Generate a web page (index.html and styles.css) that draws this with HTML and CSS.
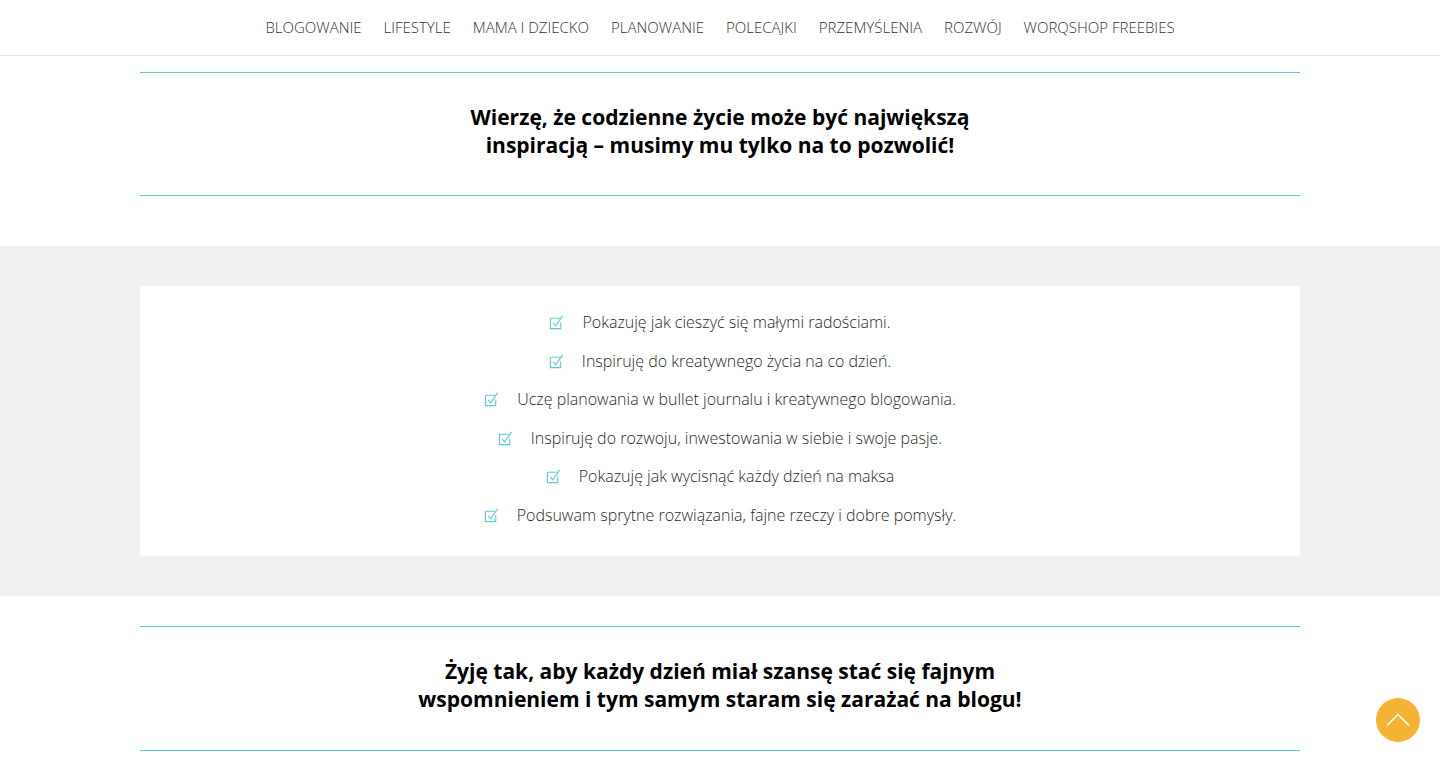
FILE: index.html
```html
<!DOCTYPE html>
<html lang="pl">
<head>
<meta charset="utf-8">
<title>Blog</title>
<link rel="stylesheet" href="styles.css">
</head>
<body>
<header class="site-header">
  <nav class="main-nav">
    <a href="#">BLOGOWANIE</a>
    <a href="#">LIFESTYLE</a>
    <a href="#">MAMA I DZIECKO</a>
    <a href="#">PLANOWANIE</a>
    <a href="#">POLECAJKI</a>
    <a href="#">PRZEMYŚLENIA</a>
    <a href="#">ROZWÓJ</a>
    <a href="#">WORQSHOP FREEBIES</a>
  </nav>
</header>

<section class="quote-section top">
  <div class="quote-box">
    <h2>Wierzę, że codzienne życie może być największą<br>inspiracją – musimy mu tylko na to pozwolić!</h2>
  </div>
</section>

<section class="gray-band">
  <div class="list-card">
    <ul class="check-list">
      <li><svg class="chk" viewBox="0 0 16 16"><path d="M1.5 3.5h10.5M1.5 3.5v11h11V8" fill="none" stroke="#5ccfd3" stroke-width="1.2"/><path d="M4.5 8.5l2.6 3L14.5 1" fill="none" stroke="#5ccfd3" stroke-width="1.2"/></svg><span>Pokazuję jak cieszyć się małymi radościami.</span></li>
      <li><svg class="chk" viewBox="0 0 16 16"><path d="M1.5 3.5h10.5M1.5 3.5v11h11V8" fill="none" stroke="#5ccfd3" stroke-width="1.2"/><path d="M4.5 8.5l2.6 3L14.5 1" fill="none" stroke="#5ccfd3" stroke-width="1.2"/></svg><span>Inspiruję do kreatywnego życia na co dzień.</span></li>
      <li><svg class="chk" viewBox="0 0 16 16"><path d="M1.5 3.5h10.5M1.5 3.5v11h11V8" fill="none" stroke="#5ccfd3" stroke-width="1.2"/><path d="M4.5 8.5l2.6 3L14.5 1" fill="none" stroke="#5ccfd3" stroke-width="1.2"/></svg><span>Uczę planowania w bullet journalu i kreatywnego blogowania.</span></li>
      <li><svg class="chk" viewBox="0 0 16 16"><path d="M1.5 3.5h10.5M1.5 3.5v11h11V8" fill="none" stroke="#5ccfd3" stroke-width="1.2"/><path d="M4.5 8.5l2.6 3L14.5 1" fill="none" stroke="#5ccfd3" stroke-width="1.2"/></svg><span>Inspiruję do rozwoju, inwestowania w siebie i swoje pasje.</span></li>
      <li><svg class="chk" viewBox="0 0 16 16"><path d="M1.5 3.5h10.5M1.5 3.5v11h11V8" fill="none" stroke="#5ccfd3" stroke-width="1.2"/><path d="M4.5 8.5l2.6 3L14.5 1" fill="none" stroke="#5ccfd3" stroke-width="1.2"/></svg><span>Pokazuję jak wycisnąć każdy dzień na maksa</span></li>
      <li><svg class="chk" viewBox="0 0 16 16"><path d="M1.5 3.5h10.5M1.5 3.5v11h11V8" fill="none" stroke="#5ccfd3" stroke-width="1.2"/><path d="M4.5 8.5l2.6 3L14.5 1" fill="none" stroke="#5ccfd3" stroke-width="1.2"/></svg><span>Podsuwam sprytne rozwiązania, fajne rzeczy i dobre pomysły.</span></li>
    </ul>
  </div>
</section>

<section class="quote-section bottom">
  <div class="quote-box">
    <h2>Żyję tak, aby każdy dzień miał szansę stać się fajnym<br>wspomnieniem i tym samym staram się zarażać na blogu!</h2>
  </div>
</section>

<a class="to-top" href="#"><svg viewBox="0 0 44 44"><path d="M11 27.5L22 16.5L33 27.5" fill="none" stroke="#fff" stroke-width="1.5"/></svg></a>
</body>
</html>
```

FILE: styles.css
```css
html, body {
  margin: 0;
  padding: 0;
  background: #fff;
  font-family: "Open Sans", "Noto Sans", sans-serif;
  color: #222;
  overflow: hidden;
}

.site-header {
  height: 55px;
  border-bottom: 1px solid #e6e6e6;
  display: flex;
  align-items: center;
  justify-content: center;
}

.main-nav {
  display: flex;
  gap: 22px;
}

.main-nav a {
  font-size: 15px;
  font-weight: 300;
  color: #333;
  text-decoration: none;
  line-height: 20px;
  margin-top: -1px;
}

.quote-section {
  display: flex;
  justify-content: center;
}

.quote-section.top {
  padding-top: 16px;
  margin-bottom: 50px;
}

.quote-section.bottom {
  padding-top: 30px;
}

.quote-box {
  width: 1160px;
  border-top: 1px solid #5ccbcc;
  border-bottom: 1px solid #5ccbcc;
  padding: 30px 0 36px;
  text-align: center;
}

.quote-section.bottom .quote-box {
  padding-bottom: 37px;
}

.quote-box h2 {
  margin: 0;
  font-size: 21px;
  line-height: 28px;
  font-weight: 700;
  color: #000;
}

.gray-band {
  background: #f1f1f1;
  padding: 40px 0;
  display: flex;
  justify-content: center;
}

.list-card {
  width: 1160px;
  background: #fff;
  padding: 17px 0 22px;
}

.check-list {
  list-style: none;
  margin: 0;
  padding: 0;
}

.check-list li {
  display: flex;
  justify-content: center;
  align-items: center;
  gap: 18px;
  height: 38.5px;
  font-size: 16px;
  font-weight: 300;
  color: #2a2a2a;
}

.chk {
  width: 15px;
  height: 15px;
  flex: none;
  margin-top: 1px;
}

.to-top {
  position: fixed;
  right: 20px;
  bottom: 30px;
  width: 44px;
  height: 44px;
  border-radius: 50%;
  background: #f5b335;
  display: block;
}

.to-top svg {
  width: 44px;
  height: 44px;
  display: block;
}
```
